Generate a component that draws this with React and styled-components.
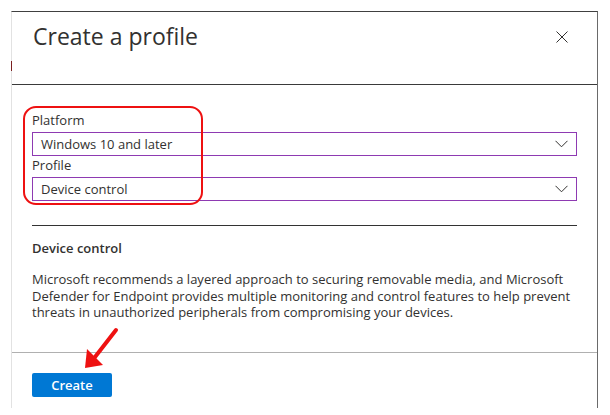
import React from "react";
import styled, { createGlobalStyle } from "styled-components";

const Global = createGlobalStyle`
  html, body { margin: 0; padding: 0; background: #ffffff; }
  body { font-family: "Open Sans", "Noto Sans", sans-serif; color: #323130; }
`;

const Page = styled.div`
  padding: 11px 0 0 11px;
  width: 610px;
  height: 415px;
  box-sizing: border-box;
  position: relative;
  overflow: hidden;
`;

const Panel = styled.section`
  width: 587px;
  height: 397px;
  box-sizing: border-box;
  border-top: 1px solid #404040;
  border-right: 1px solid #6a6a6a;
  border-left: 1px solid #e2e2e2;
  display: flex;
  flex-direction: column;
  position: relative;

  &::before {
    content: "";
    position: absolute;
    left: -1px;
    top: 49px;
    width: 1px;
    height: 10px;
    background: #7a2020;
  }
`;

const Header = styled.header`
  height: 73px;
  box-sizing: border-box;
  border-bottom: 1px solid #3a3a3a;
  display: flex;
  align-items: flex-start;
  justify-content: space-between;
  padding: 8px 28px 0 21px;
`;

const Title = styled.h1`
  margin: 0;
  font-size: 23px;
  line-height: 32px;
  font-weight: 400;
  color: #323130;
`;

const CloseButton = styled.button`
  border: 0;
  background: none;
  padding: 0;
  margin-top: 10px;
  width: 14px;
  height: 14px;
  display: flex;
  align-items: center;
  justify-content: center;
  cursor: pointer;
`;

const Body = styled.div`
  padding: 26px 20px 0 20px;
  flex: 1;
`;

const FieldGroup = styled.div`
  position: relative;
`;

const Highlight = styled.div`
  position: absolute;
  left: -9px;
  top: -5px;
  width: 180px;
  height: 99px;
  box-sizing: border-box;
  border: 2px solid #ee1111;
  border-radius: 13px;
  pointer-events: none;
`;

const Label = styled.label`
  display: block;
  font-size: 13px;
  line-height: 18px;
  margin-bottom: 3px;
  color: #323130;
`;

const Select = styled.div`
  height: 24px;
  box-sizing: border-box;
  border: 1px solid #8e3ab2;
  display: flex;
  align-items: center;
  justify-content: space-between;
  padding: 0 8px 0 8px;
  font-size: 13px;
  color: #323130;
`;

const Divider = styled.hr`
  border: 0;
  border-top: 1px solid #333333;
  margin: 24px 0 0 0;
`;

const SectionTitle = styled.h2`
  margin: 13px 0 0 0;
  font-size: 13px;
  line-height: 18px;
  font-weight: 600;
  color: #323130;
`;

const Description = styled.p`
  margin: 14px 0 0 0;
  font-size: 13px;
  line-height: 16.5px;
  color: #323130;
`;

const Footer = styled.footer`
  border-top: 1px solid #b0b0b0;
  padding: 20px 20px 11px 20px;
`;

const PrimaryButton = styled.button`
  width: 80px;
  height: 24px;
  border: 0;
  border-radius: 2px;
  background: #0078d4;
  color: #ffffff;
  font-family: inherit;
  font-size: 13px;
  font-weight: 600;
  padding: 0;
  display: flex;
  align-items: center;
  justify-content: center;
`;

const Arrow = styled.svg`
  position: absolute;
  left: 80px;
  top: 326px;
  pointer-events: none;
`;

const Chevron = () => (
  <svg width="13" height="8" viewBox="0 0 13 8">
    <path d="M0.5 0.8 L6.5 6.8 L12.5 0.8" fill="none" stroke="#323130" strokeWidth="1" />
  </svg>
);

export default function App() {
  return (
    <>
      <Global />
      <Page>
        <Panel>
          <Header>
            <Title>Create a profile</Title>
            <CloseButton aria-label="Close">
              <svg width="12" height="12" viewBox="0 0 12 12">
                <path d="M0.5 0.5 L11.5 11.5 M11.5 0.5 L0.5 11.5" stroke="#323130" strokeWidth="1" fill="none" />
              </svg>
            </CloseButton>
          </Header>
          <Body>
            <FieldGroup>
              <Highlight />
              <Label>Platform</Label>
              <Select>
                <span>Windows 10 and later</span>
                <Chevron />
              </Select>
              <Label>Profile</Label>
              <Select>
                <span>Device control</span>
                <Chevron />
              </Select>
            </FieldGroup>
            <Divider />
            <SectionTitle>Device control</SectionTitle>
            <Description>
              Microsoft recommends a layered approach to securing removable media, and Microsoft
              Defender for Endpoint provides multiple monitoring and control features to help prevent
              threats in unauthorized peripherals from compromising your devices.
            </Description>
          </Body>
          <Footer>
            <PrimaryButton>Create</PrimaryButton>
          </Footer>
        </Panel>
        <Arrow width="40" height="46" viewBox="0 0 40 46">
          <path d="M36 4 L15 31" stroke="#ee1111" strokeWidth="4" strokeLinecap="round" fill="none" />
          <polygon points="5,42 7,23 23,39" fill="#ee1111" />
        </Arrow>
      </Page>
    </>
  );
}
